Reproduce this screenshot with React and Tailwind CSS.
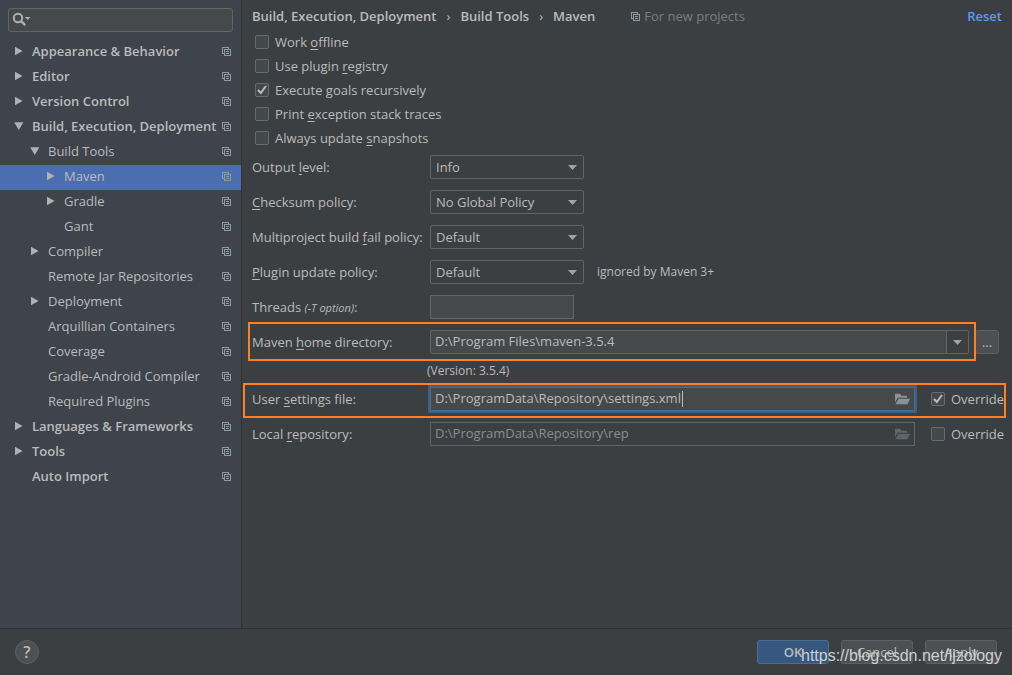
import React, { useState } from 'react';

const tree = [
  { label: 'Appearance & Behavior', level: 0, arrow: 'right' },
  { label: 'Editor', level: 0, arrow: 'right' },
  { label: 'Version Control', level: 0, arrow: 'right' },
  { label: 'Build, Execution, Deployment', level: 0, arrow: 'down' },
  { label: 'Build Tools', level: 1, arrow: 'down' },
  { label: 'Maven', level: 2, arrow: 'right' },
  { label: 'Gradle', level: 2, arrow: 'right' },
  { label: 'Gant', level: 2 },
  { label: 'Compiler', level: 1, arrow: 'right' },
  { label: 'Remote Jar Repositories', level: 1 },
  { label: 'Deployment', level: 1, arrow: 'right' },
  { label: 'Arquillian Containers', level: 1 },
  { label: 'Coverage', level: 1 },
  { label: 'Gradle-Android Compiler', level: 1 },
  { label: 'Required Plugins', level: 1 },
  { label: 'Languages & Frameworks', level: 0, arrow: 'right' },
  { label: 'Tools', level: 0, arrow: 'right' },
  { label: 'Auto Import', level: 0 },
];

const levelPadding = ['pl-[14px]', 'pl-[30px]', 'pl-[46px]'];

const goals = [
  { id: 'offline', text: ['Work ', 'o', 'ffline'], on: false },
  { id: 'registry', text: ['Use plugin ', 'r', 'egistry'], on: false },
  { id: 'recursive', text: ['Execute ', 'g', 'oals recursively'], on: true },
  { id: 'traces', text: ['Print ', 'e', 'xception stack traces'], on: false },
  { id: 'snapshots', text: ['Always update ', 's', 'napshots'], on: false },
];

const policies = [
  { id: 'output', text: ['Output ', 'l', 'evel:'], options: ['Info', 'Debug', 'Warn', 'Error'] },
  { id: 'checksum', text: ['', 'C', 'hecksum policy:'], options: ['No Global Policy', 'Fail', 'Warn'] },
  { id: 'fail', text: ['Multiproject build ', 'f', 'ail policy:'], options: ['Default', 'Fail Fast', 'Fail Never'] },
  { id: 'update', text: ['', 'P', 'lugin update policy:'], options: ['Default', 'Update'], note: 'ignored by Maven 3+' },
];

function Mnemonic({ text }) {
  return (
    <>
      {text[0]}
      <span className="underline underline-offset-2">{text[1]}</span>
      {text[2]}
    </>
  );
}

function CopyIcon() {
  return (
    <svg className="w-[9px] h-[9px] shrink-0" viewBox="0 0 9 9" fill="none" stroke="#8d9aa3" shapeRendering="crispEdges">
      <path d="M2 6.5H.5V.5h6V2" />
      <path d="M2.5 2.5h6v6h-6zM4 4.5h3M4 6.5h3" />
    </svg>
  );
}

function TreeArrow({ dir }) {
  return (
    <svg className="w-[10px] h-[10px] shrink-0" viewBox="0 0 10 10" fill="#afb1b3">
      {dir === 'right' && <path d="M1 .8L8.6 5 1 9.2z" />}
      {dir === 'down' && <path d="M.2 1.2h9.2L4.8 9z" />}
    </svg>
  );
}

function DropArrow({ className = '' }) {
  return (
    <svg className={`w-[9px] h-[5px] ${className}`} viewBox="0 0 9 5" fill="#a0a3a5">
      <path d="M0 0h9L4.5 5z" />
    </svg>
  );
}

function FolderIcon({ color }) {
  return (
    <svg className="w-[15px] h-[12px]" viewBox="0 0 15 12" fill={color}>
      <path d="M0 9.5V.8h5l1.4 2H12v2H2.6z" />
      <path d="M3.4 5.8H15l-2.6 5.4H.4z" />
    </svg>
  );
}

function Check({ id, checked, onChange, children }) {
  return (
    <label htmlFor={id} className="flex items-center gap-[6px]">
      <span className="relative flex">
        <input
          id={id}
          type="checkbox"
          checked={checked}
          onChange={onChange}
          className="appearance-none w-[14px] h-[14px] rounded-[2px] border border-[#6b6b6b] bg-[#43494a]"
        />
        {checked && (
          <svg className="absolute inset-0 w-[14px] h-[14px] pointer-events-none" viewBox="0 0 14 14" fill="none" stroke="#bbbbbb" strokeWidth="2">
            <path d="M3 7l2.8 3L11 3" />
          </svg>
        )}
      </span>
      <span>{children}</span>
    </label>
  );
}

function FileRow({ id, text, value, focused, override, onOverride }) {
  return (
    <div className="relative flex items-center h-6">
      <label htmlFor={id} className="w-[178px] shrink-0">
        <Mnemonic text={text} />
      </label>
      <div className="relative flex-1 flex items-center">
        <input
          id={id}
          type="text"
          defaultValue={value}
          disabled={!override}
          className={`w-full h-6 pl-1 pr-6 pb-[2px] border outline-none ${
            focused ? 'border-[#466d94] ring-2 ring-[#3d6185]' : 'border-[#646464]'
          } ${override ? 'bg-[#45494a] text-[#bbbbbb]' : 'bg-[#3c3f41] text-[#8c8c8c]'}`}
        />
        {focused && <span className="absolute left-[252px] top-1 w-px h-4 bg-[#bbbbbb]" />}
        <button type="button" aria-label="Browse" className="absolute right-[5px]">
          <FolderIcon color={override ? '#87929a' : '#5f6669'} />
        </button>
      </div>
      <div className="ml-4 w-[71px]">
        <Check id={`${id}-override`} checked={override} onChange={onOverride}>Override</Check>
      </div>
      {focused && <div className="absolute -top-1 -bottom-[7px] -left-[9px] -right-1 border-2 border-[#ff7f27] pointer-events-none" />}
    </div>
  );
}

function Sidebar({ selected, onSelect }) {
  return (
    <aside className="w-[242px] shrink-0 bg-[#3e434c] border-r border-[#323232] pt-2">
      <div className="relative mx-2 flex items-center">
        <input
          type="text"
          aria-label="Search settings"
          className="w-full h-6 pl-7 rounded-[3px] border border-[#646464] bg-[#45494a] outline-none"
        />
        <svg className="absolute left-1 top-1 w-5 h-4 pointer-events-none" viewBox="0 0 20 16" fill="none" stroke="#afb1b3" strokeWidth="2">
          <circle cx="6" cy="6" r="4.2" />
          <path d="M9 9l4.2 4.2" strokeWidth="2.4" />
          <path d="M13 5h5.4L15.7 8z" fill="#afb1b3" stroke="none" />
        </svg>
      </div>
      <nav className="mt-2">
        {tree.map((item) => (
          <button
            key={item.label}
            type="button"
            onClick={() => onSelect(item.label)}
            className={`w-full h-[25px] flex items-center gap-2 pb-[3px] pr-[10px] text-left whitespace-nowrap ${levelPadding[item.level]} ${
              item.level === 0 ? 'font-semibold' : ''
            } ${item.label === selected ? 'bg-[#4b6eaf]' : ''}`}
          >
            <TreeArrow dir={item.arrow} />
            <span className="flex-1 min-w-0">{item.label}</span>
            <CopyIcon />
          </button>
        ))}
      </nav>
    </aside>
  );
}

export default function App() {
  const [selected, setSelected] = useState('Maven');
  const [flags, setFlags] = useState(Object.fromEntries(goals.map((g) => [g.id, g.on])));
  const [overrides, setOverrides] = useState({ settings: true, local: false });

  const toggle = (id) => setFlags({ ...flags, [id]: !flags[id] });
  const toggleOverride = (id) => setOverrides({ ...overrides, [id]: !overrides[id] });

  return (
    <div className="relative min-h-screen flex flex-col bg-[#3c3f41] text-[#bbbbbb] text-[13px] leading-4 font-['Open_Sans',sans-serif]">
      <div className="flex-1 flex">
        <Sidebar selected={selected} onSelect={setSelected} />

        <main className="flex-1 min-w-0 pl-[10px] pr-[10px]">
          <header className="h-[30px] pt-[2px] flex items-center">
            <div className="flex gap-[10px] font-semibold whitespace-nowrap">
              <span>Build, Execution, Deployment</span>
              <span className="font-normal">›</span>
              <span>Build Tools</span>
              <span className="font-normal">›</span>
              <span>Maven</span>
            </div>
            <div className="ml-9 flex items-center gap-1 text-[#7d7d7d]">
              <CopyIcon />
              <span>For new projects</span>
            </div>
            <a href="#reset" className="ml-auto font-semibold text-[#589df6]">Reset</a>
          </header>

          <div className="pl-[3px]">
            {goals.map((g) => (
              <div key={g.id} className="h-6 flex items-center">
                <Check id={g.id} checked={flags[g.id]} onChange={() => toggle(g.id)}>
                  <Mnemonic text={g.text} />
                </Check>
              </div>
            ))}
          </div>

          <div className="mt-[5px] flex flex-col gap-[11px]">
            {policies.map((p) => (
              <div key={p.id} className="flex items-center h-6">
                <label htmlFor={p.id} className="w-[178px] shrink-0 whitespace-nowrap">
                  <Mnemonic text={p.text} />
                </label>
                <div className="relative flex items-center">
                  <select id={p.id} className="appearance-none w-[154px] h-6 pl-[5px] rounded-[2px] border border-[#646464] bg-[#3c3f41] outline-none">
                    {p.options.map((o) => <option key={o}>{o}</option>)}
                  </select>
                  <DropArrow className="absolute right-[7px] pointer-events-none" />
                </div>
                {p.note && <span className="ml-[13px] text-xs">{p.note}</span>}
              </div>
            ))}

            <div className="flex items-center h-6">
              <label htmlFor="threads" className="w-[178px] shrink-0">
                Threads <i className="text-[11px]">(-T option)</i>:
              </label>
              <input id="threads" type="text" className="w-36 h-6 px-1 border border-[#646464] bg-[#45494a] outline-none" />
            </div>

            <div className="relative flex items-center h-6">
              <label htmlFor="home" className="w-[178px] shrink-0">
                <Mnemonic text={['Maven ', 'h', 'ome directory:']} />
              </label>
              <div className="flex-1 flex h-6 rounded-[2px] border border-[#646464] bg-[#45494a]">
                <input id="home" type="text" defaultValue="D:\Program Files\maven-3.5.4" className="flex-1 min-w-0 pl-1 pb-[2px] outline-none" />
                <button type="button" aria-label="Show recent" className="w-[22px] flex items-center justify-center border-l border-[#646464] bg-[#3c3f41]">
                  <DropArrow />
                </button>
              </div>
              <button type="button" className="ml-[6px] mr-[3px] w-6 h-6 rounded-[3px] border border-[#5e6060] bg-[#4c5052]">...</button>
              <div className="absolute -top-2 -bottom-[7px] -left-1 right-[26px] border-2 border-[#ff7f27] pointer-events-none" />
            </div>
          </div>

          <div className="h-[33px] pl-[175px] flex items-center text-xs">(Version: 3.5.4)</div>

          <div className="flex flex-col gap-[11px]">
            <FileRow
              id="settings"
              text={['User ', 's', 'ettings file:']}
              value="D:\ProgramData\Repository\settings.xml"
              focused
              override={overrides.settings}
              onOverride={() => toggleOverride('settings')}
            />
            <FileRow
              id="local"
              text={['Local ', 'r', 'epository:']}
              value="D:\ProgramData\Repository\rep"
              override={overrides.local}
              onOverride={() => toggleOverride('local')}
            />
          </div>
        </main>
      </div>

      <footer className="flex items-center border-t border-[#323232] py-[11px] pl-[15px] pr-[15px]">
        <button type="button" aria-label="Help" className="w-6 h-6 rounded-full border border-[#5e6060] bg-[#4c5052] flex items-center justify-center">
          <span className="text-base leading-4 font-semibold">?</span>
        </button>
        <div className="ml-auto flex gap-3">
          <button type="button" className="w-[72px] h-6 rounded-[3px] border border-[#4c708c] bg-[#365880] font-semibold">OK</button>
          <button type="button" className="w-[72px] h-6 rounded-[3px] border border-[#5e6060] bg-[#4c5052]">Cancel</button>
          <button type="button" className="w-[72px] h-6 rounded-[3px] border border-[#5e6060] bg-[#4c5052]">Apply</button>
        </div>
      </footer>

      <div className="absolute right-[10px] bottom-[10px] text-base leading-[18px] text-[#d0d0d0] font-['Liberation_Sans',sans-serif] pointer-events-none">
        https://blog.csdn.net/ljzology
      </div>
    </div>
  );
}
